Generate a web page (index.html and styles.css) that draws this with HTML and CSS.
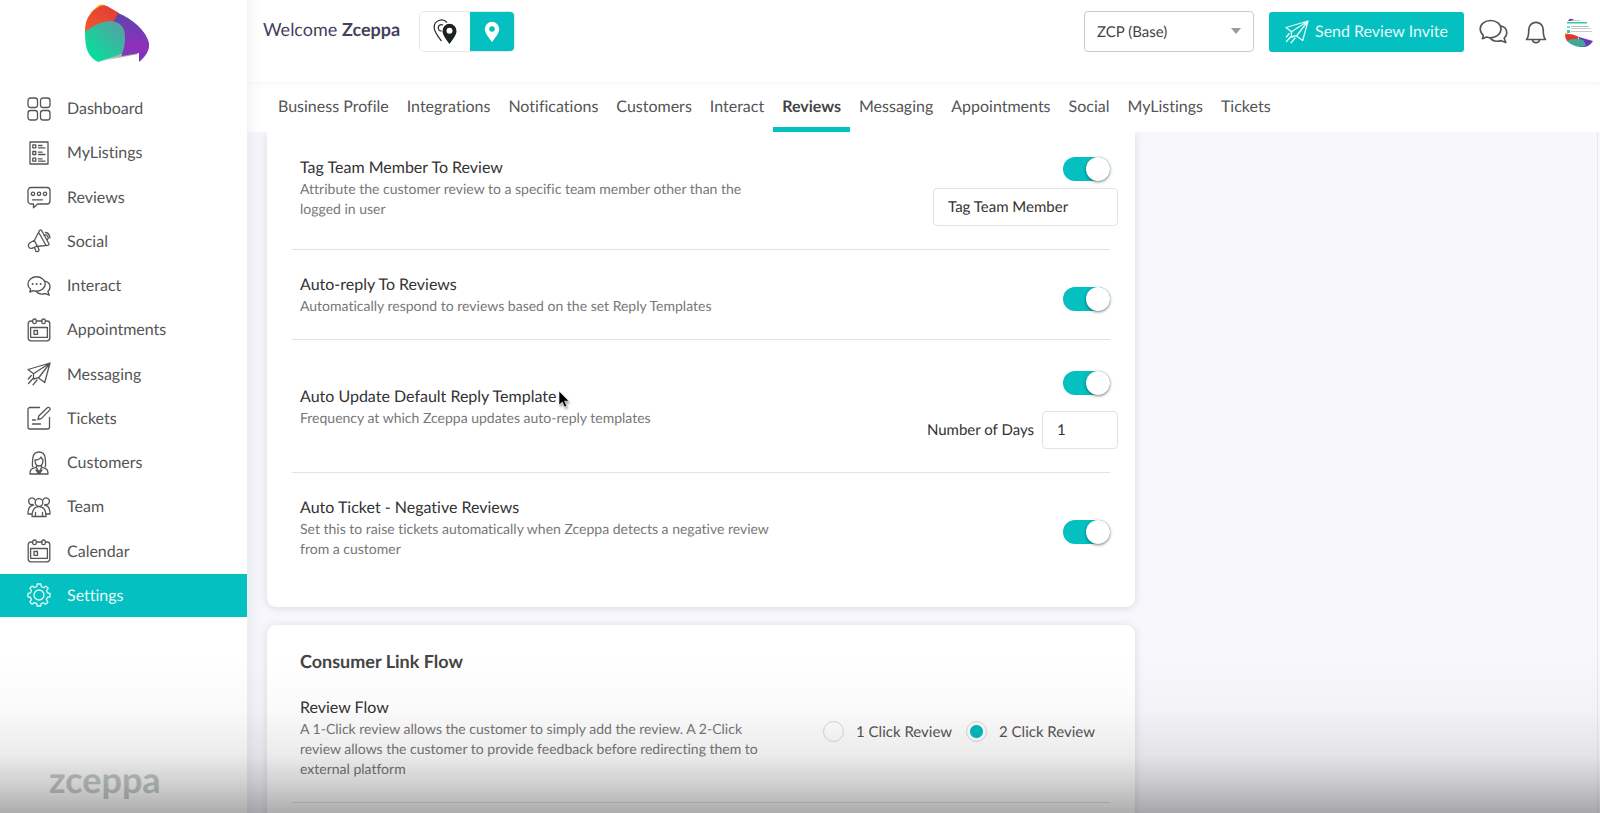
FILE: index.html
```html
<!DOCTYPE html>
<html lang="en">
<head>
<meta charset="utf-8">
<title>Zceppa - Review Settings</title>
<link rel="stylesheet" href="styles.css">
</head>
<body>
<svg class="defs" aria-hidden="true">
  <symbol id="i-calendar" viewBox="0 0 24 24"><path d="M5.500 3H4a2.800 2.800 0 0 0-2.800 2.800V20A2.800 2.800 0 0 0 4 22.800h16a2.800 2.800 0 0 0 2.800-2.800V5.800A2.800 2.800 0 0 0 20 3h-1M9.500 3h5.500"/><rect x="5.700" y="1" width="3.600" height="4.600" rx="1.700"/><rect x="14.700" y="1" width="3.600" height="4.600" rx="1.700"/><path d="M3.600 9.500h16.800v9.800H3.600zM7 12.500h3.500v3.800H7z"/></symbol>
  <symbol id="i-chat" viewBox="0 0 30 26"><path d="M3.500 20.500 4.500 17C2.500 15.500 1.200 13.200 1.200 10.500 1.200 5.500 6 1.500 12 1.500s10.800 4 10.800 9-4.800 9-10.800 9c-1.500 0-3-.2-4.200-.7z"/><path d="M22.500 7c3.800 1 6.300 4 6.300 7.300 0 2.200-1 4.200-2.700 5.700l1.700 4.500-4.800-2c-5 1.300-9.500 0-11.500-3"/></symbol>
  <symbol id="i-plane" viewBox="0 0 24 24"><path d="M23 1 1 7.500l5.500 4.300L23 1l-5.300 19.500L11.500 16 23 1M6.500 11.800V17l4.800-1.300M1.300 17l3-3.500M1.500 21.500l4.200-4.700M6 22.800l4-4.800"/></symbol>
</svg>
<div class="app">
  <aside class="sidebar">
    <a class="logo" href="#" aria-label="Zceppa home">
      <svg viewBox="0 0 64 60" width="64" height="60">
        <defs>
          <linearGradient id="g1" x1="0" y1="1" x2="1" y2="0"><stop offset=".2" stop-color="#0bdb9c"/><stop offset="1" stop-color="#5f9aa4"/></linearGradient>
          <linearGradient id="g2" x1="0" y1="0" x2="0" y2="1"><stop offset="0" stop-color="#5c45ab"/><stop offset=".7" stop-color="#9030bb"/><stop offset="1" stop-color="#7039b8"/></linearGradient>
          <linearGradient id="g3" x1="0" y1="1" x2="1" y2="0"><stop offset="0" stop-color="#f4582e"/><stop offset="1" stop-color="#dd3a38"/></linearGradient>
          <linearGradient id="g4" x1="0" y1="0" x2="0" y2="1"><stop offset="0" stop-color="#777"/><stop offset="1" stop-color="#fff"/></linearGradient>
        </defs>
        <path fill="url(#g4)" d="M9 56 50 48l3 2-39 8z"/>
        <path fill="#f8a51b" d="M5 9 14 1q3-1 6 0l3 4z"/>
        <path fill="url(#g3)" d="M0 28C0 15 4 8 16 2q3-1 6 0l12 7-3 10z"/>
        <path fill="url(#g2)" d="M33 9c15 6 28 18 31 30 1 7-3 13-10 19v-9l-17 3-8-35z"/>
        <path fill="url(#g1)" d="M0 28c9-7 17-11 26-11 9 1 14 6 14 16 0 7-1 12-3 17l-24 8C3 53 0 45 0 28z"/>
      </svg>
    </a>
    <nav aria-label="Main">
      <ul class="menu">
        <li><a href="#"><svg class="icon" viewBox="0 0 24 24"><rect x="1" y="1" width="9.500" height="9.500" rx="2.500"/><rect x="13.500" y="1" width="9.500" height="9.500" rx="2.500"/><rect x="1" y="13.500" width="9.500" height="9.500" rx="2.500"/><rect x="13.500" y="13.500" width="9.500" height="9.500" rx="2.500"/></svg>Dashboard</a></li>
        <li><a href="#"><svg class="icon" viewBox="0 0 24 24"><path d="M3 1h18v22H3zM5.800 3.800h3v3h-3zM5.800 10.500h3v3h-3zM5.800 17.200h3v3h-3zM11.500 4.500h3.500M11.500 6.800h6.500M11.500 11.200h3.500M11.500 13.500h6.500M11.500 17.900h3.500M11.500 20.200h6.500"/></svg>MyListings</a></li>
        <li><a href="#"><svg class="icon" viewBox="0 0 24 24"><path d="M4 2.500h16a3 3 0 0 1 3 3V16a3 3 0 0 1-3 3h-9.500l-4 3.800V19H4a3 3 0 0 1-3-3V5.500a3 3 0 0 1 3-3zM5.500 14.800h10"/><circle cx="6" cy="8.800" r="1.700"/><circle cx="12" cy="8.800" r="1.700"/><circle cx="18" cy="8.800" r="1.700"/></svg>Reviews</a></li>
        <li><a href="#"><svg class="icon" viewBox="0 0 24 24"><path d="M12.500 1.500q1.200-1.200 2.300.3l7 12.700q.7 1.800-1.300 1.800L9 17.500l-4 1.800C1.500 20 0 16 3 13.800l4.500-2.500zM7.300 11.500l3 5.800M12 4l6.800 12M7.500 18.500l1.500 4q2.500.8 3-1.500l-1.200-3.500M17 6.500c3-2 5.500 2 3.200 4.500M18.500 3.500q4 .5 4.500 5.500"/></svg>Social</a></li>
        <li><a href="#"><svg class="icon" viewBox="0 0 30 26"><g stroke-width="1.700"><use href="#i-chat" width="30" height="26"/></g><path class="dots" d="M7 10.500h.1M12 10.500h.1M17 10.500h.1"/></svg>Interact</a></li>
        <li><a href="#"><svg class="icon"><use href="#i-calendar"/></svg>Appointments</a></li>
        <li><a href="#"><svg class="icon"><use href="#i-plane"/></svg>Messaging</a></li>
        <li><a href="#"><svg class="icon" viewBox="0 0 24 24"><path d="M12.500 1.500H3a2 2 0 0 0-2 2V21a2 2 0 0 0 2 2h17.500a2 2 0 0 0 2-2V11.500M5.500 18h8M5.500 14h3M11 13.500l.8-3.500 8.500-8.300q1.300-.8 2.300.2t0 2.200L14.300 12.600z"/></svg>Tickets</a></li>
        <li><a href="#"><svg class="icon" viewBox="0 0 24 24"><path d="M6 15.500C5 17 5.500 10 5.800 7 6.300 3 9 1 12 1s5.700 2 6.200 6c.3 3 .8 10-.2 8.500M8 9c3 0 5-1 6-3 .5 1.500 1.200 2.300 2 2.500 0 4-1.500 6.500-4 6.500S8 12.500 8 9zM9.500 14.500v2.300L12 21l2.500-4.200v-2.300M9.500 16 5 17.800C3.500 18.500 3 20 3 23h18c0-3-.5-4.500-2-5.200L14.500 16M9 19l3 4 3-4"/></svg>Customers</a></li>
        <li><a href="#"><svg class="icon" viewBox="0 0 24 24"><circle cx="12" cy="7.500" r="3.800"/><path d="M8 5A3.300 3.300 0 1 0 5.500 9.500M16 5a3.300 3.300 0 1 1 2.500 4.500M5 21.500c0-6 2-9.800 7-9.800s7 3.800 7 9.800zM8.500 21.500v-4M15.500 21.500v-4M5 19H1c0-5 1-8.500 5.500-9M19 19h4c0-5-1-8.500-5.500-9"/></svg>Team</a></li>
        <li><a href="#"><svg class="icon"><use href="#i-calendar"/></svg>Calendar</a></li>
        <li><a href="#" class="active" aria-current="page"><svg class="icon" viewBox="0 0 24 24"><circle cx="12" cy="12" r="5"/><path d="M9.700 3.700 10.200 1h3.600l.5 2.700q1.300.3 2.400 1L19 3.100 21.200 5.300 19.500 7.600q.6 1 .9 2.200L23 10.300v3.500l-2.700.5q-.3 1.300-1 2.400l1.600 2.300-2.300 2.300-2.300-1.600q-1 .6-2.200.9L13.700 23h-3.500l-.5-2.500q-1.300-.3-2.300-.9L5 21.200 2.800 18.900 4.500 16.600q-.6-1-.9-2.200L1 13.800v-3.500l2.600-.5q.3-1.300.9-2.300L2.900 5.200 5.200 2.900 7.400 4.600q1-.6 2.300-.9z"/></svg>Settings</a></li>
      </ul>
    </nav>
    <p class="wordmark">zceppa</p>
  </aside>

  <div class="page">
    <header class="topbar">
      <p class="welcome">Welcome <strong>Zceppa</strong></p>
      <div class="view-switch">
        <button type="button" aria-label="All locations"><svg viewBox="0 0 24 26" width="24" height="26"><path class="pin-line" d="M8.500 22C4.500 17 1.200 13 1.200 8.500A7.300 7.300 0 0 1 14 3.500"/><path class="pin-line" d="M10 6a3.200 3.200 0 1 0-1.500 6"/><path class="pin-dark" fill-rule="evenodd" d="M16.500 4.800A7 7 0 0 1 23.500 12c0 4-3.500 8-7 13-3.500-5-7-9-7-13a7 7 0 0 1 7-7.200zm0 4a3 3 0 1 0 0 6 3 3 0 0 0 0-6z"/></svg></button>
        <button type="button" class="on" aria-label="Single location"><svg viewBox="0 0 16 22" width="16" height="22"><path fill="#fff" fill-rule="evenodd" d="M8 .8A7.200 7.200 0 0 1 15.200 8c0 4-3.700 8-7.200 13.300C4.500 16 .8 12 .8 8A7.200 7.200 0 0 1 8 .8zm0 4.400a2.800 2.800 0 1 0 0 5.600 2.800 2.800 0 0 0 0-5.600z"/></svg></button>
      </div>
      <div class="actions">
        <div class="location">
          <select aria-label="Location"><option>ZCP (Base)</option></select>
          <svg class="caret" viewBox="0 0 10 6" width="10" height="6"><path d="M0 0h10L5 6z"/></svg>
        </div>
        <button type="button" class="invite"><svg class="icon"><use href="#i-plane"/></svg>Send Review Invite</button>
        <button type="button" class="plain" aria-label="Conversations"><svg class="icon-lg" width="29" height="25"><use href="#i-chat"/></svg></button>
        <button type="button" class="plain" aria-label="Notifications"><svg class="icon-lg" viewBox="0 0 22 24" width="22" height="24"><path d="M1.500 19.500c2-2 2.300-5 2.300-10a7.200 7.200 0 0 1 14.400 0c0 5 .3 8 2.300 10zM7.500 20c.5 3.500 6.500 3.500 7 0"/></svg></button>
        <button type="button" class="plain" aria-label="Account"><svg viewBox="0 0 30 30" width="30" height="30">
          <path fill="#7039b8" d="M4 4q2-4 6-1l-1 1z"/><path fill="#2bc9a6" d="M3 5h20v1.500H3zM3 9.500h3v1.200H3zM3 13h3v3H3z"/><path fill="#bbb" d="M7 3h9v.8H7zM7 9h18v1H7zM7 11h20v.7H7zM7 14h21v.7H7z"/>
          <path fill="#f8a51b" d="M1 16l4 1-4 2z"/><path fill="#dd3a2f" d="M1 18c3-2 8-1 14 2l-3 5-9-1q-2-3-2-6z"/><path fill="#6a38b5" d="M15 20l14 4q-3 5-8 6h-6z"/><path fill="#3fa994" d="M3 24c6-3 14-3 17 0l2 5q-11 3-19-5z"/></svg></button>
      </div>
    </header>

    <nav class="tabs" aria-label="Settings sections">
      <a href="#">Business Profile</a><a href="#">Integrations</a><a href="#">Notifications</a><a href="#">Customers</a><a href="#">Interact</a><a href="#" class="active" aria-current="page">Reviews</a><a href="#">Messaging</a><a href="#">Appointments</a><a href="#">Social</a><a href="#">MyListings</a><a href="#">Tickets</a>
    </nav>

    <main class="content">
      <section class="card card-continued">
        <div class="setting">
          <div class="about">
            <h3 id="tag">Tag Team Member To Review</h3>
            <p>Attribute the customer review to a specific team member other than the logged in user</p>
          </div>
          <div class="controls">
            <input type="checkbox" class="toggle" role="switch" aria-labelledby="tag" checked>
            <input type="text" class="field member" aria-label="Tag label" value="Tag Team Member">
          </div>
        </div>
        <div class="setting">
          <div class="about">
            <h3 id="reply">Auto-reply To Reviews</h3>
            <p>Automatically respond to reviews based on the set Reply Templates</p>
          </div>
          <div class="controls">
            <input type="checkbox" class="toggle" role="switch" aria-labelledby="reply" checked>
          </div>
        </div>
        <div class="setting">
          <div class="about">
            <h3 id="update">Auto Update Default Reply Template</h3>
            <p>Frequency at which Zceppa updates auto-reply templates</p>
          </div>
          <div class="controls spaced">
            <input type="checkbox" class="toggle" role="switch" aria-labelledby="update" checked>
            <div class="days">
              <label for="days">Number of Days</label>
              <input type="text" id="days" class="field" inputmode="numeric" value="1">
            </div>
          </div>
        </div>
        <div class="setting">
          <div class="about">
            <h3 id="ticket">Auto Ticket - Negative Reviews</h3>
            <p>Set this to raise tickets automatically when Zceppa detects a negative review from a customer</p>
          </div>
          <div class="controls">
            <input type="checkbox" class="toggle" role="switch" aria-labelledby="ticket" checked>
          </div>
        </div>
      </section>

      <section class="card">
        <h2>Consumer Link Flow</h2>
        <div class="setting">
          <div class="about">
            <h3>Review Flow</h3>
            <p>A 1-Click review allows the customer to simply add the review. A 2-Click review allows the customer to provide feedback before redirecting them to external platform</p>
          </div>
          <div class="choices" role="radiogroup" aria-label="Review Flow">
            <label><input type="radio" name="flow">1 Click Review</label>
            <label><input type="radio" name="flow" checked>2 Click Review</label>
          </div>
        </div>
        <div class="setting"></div>
      </section>
    </main>
  </div>
</div>
<svg class="pointer" viewBox="0 0 12 18" width="12" height="18" aria-hidden="true"><path d="M1 1v14l3.300-3 2.200 5 2.300-1-2.200-4.800H11z"/></svg>
<div class="shade"></div>
</body>
</html>
```
FILE: styles.css
```css
* { box-sizing: border-box; }

body {
  margin: 0;
  height: 100vh;
  overflow: hidden;
  background: #fff;
  color: #555;
  font-family: Lato, "Liberation Sans", sans-serif;
  font-size: 16px;
  font-variant-ligatures: none;
  text-rendering: geometricPrecision;
}

h2, h3, p, ul { margin: 0; padding: 0; }
a { color: inherit; text-decoration: none; }
button, input, select { font: inherit; color: inherit; margin: 0; text-rendering: inherit; }
button { cursor: pointer; }
.defs { position: absolute; width: 0; height: 0; }

.app { display: flex; height: 100vh; }

/* Sidebar */
.sidebar {
  display: flex;
  flex-direction: column;
  flex: 0 0 247px;
  background: #fff;
}
.logo {
  display: block;
  padding: 4px 0 0 85px;
  height: 87px;
}
.menu {
  display: flex;
  flex-direction: column;
  justify-content: space-between;
  min-height: 530px;
  list-style: none;
}
.menu a {
  display: flex;
  align-items: center;
  gap: 16px;
  height: 43px;
  padding-left: 27px;
}
.menu .active { background: #04c0c1; color: #e4fbfb; }
.icon {
  flex: none;
  width: 24px;
  height: 24px;
  fill: none;
  stroke: currentColor;
  stroke-width: 1.3;
  stroke-linecap: round;
  stroke-linejoin: round;
}
.dots { stroke-width: 2.4; }
.wordmark {
  margin: auto 0 14px 49px;
  color: #c6cdcb;
  font-size: 36px;
  font-weight: 700;
  line-height: 40px;
}

/* Header */
.page {
  display: flex;
  flex-direction: column;
  flex: 1;
  min-width: 0;
  background: #f7f7fc;
  box-shadow: inset 14px 0 14px -10px #e8e8f0;
}
.topbar {
  display: flex;
  align-items: flex-start;
  flex: none;
  height: 82px;
  padding: 11px 6px 0 16px;
  background: #fff;
  box-shadow: inset 14px 0 14px -12px #eee;
}
.welcome {
  margin-right: 19px;
  color: #453f5c;
  font-size: 18px;
  line-height: 37px;
}
.view-switch {
  display: flex;
  overflow: hidden;
  height: 41px;
  border: 1px solid #e6e6e6;
  border-radius: 5px;
}
.view-switch button {
  display: flex;
  align-items: center;
  justify-content: center;
  width: 50px;
  padding: 0;
  border: 0;
  background: #fff;
}
.view-switch .on { width: 44px; background: #04c0c1; }
.pin-line { fill: none; stroke: #333; stroke-width: 1.3; }
.pin-dark { fill: #1b2226; }
.actions {
  display: flex;
  align-items: center;
  gap: 15px;
  margin-left: auto;
}
.location { position: relative; display: flex; }
.location select {
  width: 170px;
  height: 41px;
  padding: 0 12px;
  border: 1px solid #ccc;
  border-radius: 4px;
  background: #fff;
  color: #444;
  font-size: 15px;
  appearance: none;
}
.caret {
  position: absolute;
  top: 17px;
  right: 13px;
  fill: #999;
  pointer-events: none;
}
.invite {
  display: flex;
  align-items: center;
  gap: 6px;
  height: 40px;
  padding: 0 16px;
  border: 0;
  border-radius: 3px;
  background: #04c0c1;
  color: #e4fbfb;
}
.plain {
  display: flex;
  padding: 0;
  border: 0;
  background: none;
}
.plain + .plain { margin-left: 2px; }
.icon-lg { fill: none; stroke: #555; stroke-width: 1.7; stroke-linejoin: round; stroke-linecap: round; }

/* Section tabs */
.tabs {
  display: flex;
  flex: none;
  height: 50px;
  padding-left: 22px;
  background: #fff;
  box-shadow: inset 14px 0 14px -12px #eee, inset 0 6px 6px -5px #f3f3f3;
}
.tabs a {
  padding: 0 9px;
  border-bottom: 5px solid transparent;
  line-height: 50px;
  white-space: nowrap;
}
.tabs .active {
  border-color: #04c0c1;
  color: #444;
  font-weight: 700;
}

/* Settings cards */
.content {
  display: flex;
  flex-direction: column;
  flex: 1;
  gap: 18px;
  min-height: 0;
  overflow: hidden;
  margin-right: 2px;
  padding: 0 20px;
  border-right: 1px solid #e8e8ee;
}
.card {
  flex: none;
  width: 100%;
  max-width: 868px;
  padding: 24px 25px 25px;
  border-radius: 9px;
  background: #fff;
  box-shadow: 0 1px 8px rgba(60, 60, 100, .16);
}
.card-continued {
  padding-top: 0;
  border-radius: 0 0 9px 9px;
}
h2 {
  padding-left: 8px;
  color: #444;
  font-size: 18px;
  line-height: 24px;
}
.setting {
  display: flex;
  align-items: center;
  justify-content: space-between;
  padding: 23px 0 23px 8px;
  border-bottom: 1px solid #e2e2e2;
}
.setting:last-child { border-bottom: 0; }
.card-continued .setting:first-child { padding-top: 17px; }
.about { width: 100%; max-width: 474px; }
h3 {
  color: #333;
  font-size: 16px;
  font-weight: 400;
  line-height: 23px;
}
.about p {
  color: #777;
  font-size: 14px;
  line-height: 20px;
}
.controls {
  display: flex;
  flex-direction: column;
  align-items: flex-end;
  gap: 7px;
  padding-top: 8px;
}
.spaced { gap: 16px; }
.toggle {
  width: 47px;
  height: 24px;
  border-radius: 12px;
  background: #ccc;
  appearance: none;
}
.toggle::before {
  content: "";
  display: block;
  width: 24px;
  height: 24px;
  border-radius: 50%;
  background: #fff;
  box-shadow: 0 1px 3px rgba(0, 0, 0, .5);
}
.toggle:checked { background: #04c0c1; }
.toggle:checked::before { margin-left: auto; }
.field {
  width: 76px;
  height: 38px;
  margin-right: -8px;
  padding: 0 14px;
  border: 1px solid #e4e4e4;
  border-radius: 4px;
  background: #fff;
  color: #333;
  font-size: 15px;
}
.member { width: 185px; }
.days {
  display: flex;
  align-items: center;
  gap: 8px;
  color: #333;
  font-size: 15px;
}
.choices {
  display: flex;
  gap: 14px;
  padding: 0 15px 12px 0;
  font-size: 15px;
}
.choices label {
  display: flex;
  align-items: center;
  gap: 12px;
  white-space: nowrap;
}
.choices input {
  width: 21px;
  height: 21px;
  border: 1px solid #d8d8d8;
  border-radius: 50%;
  background: #fff;
  appearance: none;
}
.choices input:checked {
  background: radial-gradient(circle, #04bcbd 6px, #fff 7px);
}

.pointer {
  position: absolute;
  top: 390px;
  left: 558px;
  fill: #000;
  stroke: #fff;
  stroke-width: .6;
  filter: drop-shadow(1px 2px 1px rgba(0, 0, 0, .35));
}
.shade {
  position: fixed;
  inset: auto 0 0;
  height: 160px;
  background: linear-gradient(rgba(0, 0, 0, 0), rgba(0, 0, 0, .02) 35%, rgba(0, 0, 0, .08) 64%, rgba(0, 0, 0, .19) 82%, rgba(0, 0, 0, .32));
  pointer-events: none;
}
```
